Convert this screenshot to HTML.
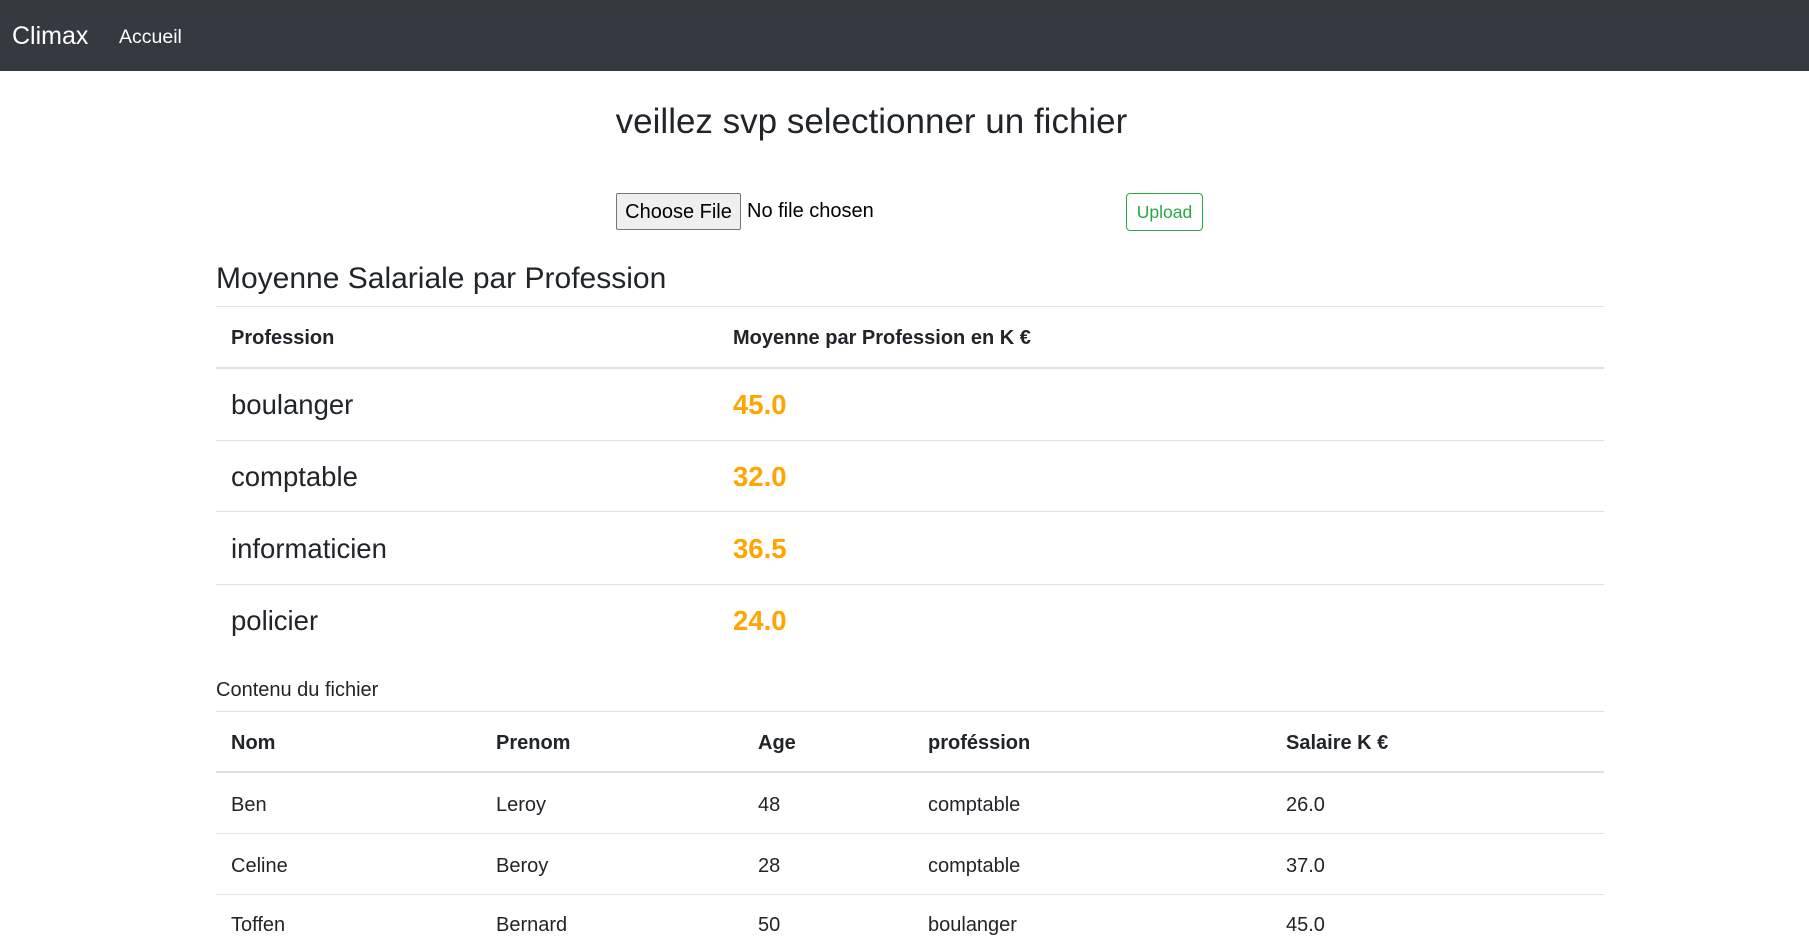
<!DOCTYPE html>
<html><head><meta charset="utf-8"><style>
*{box-sizing:border-box;margin:0;padding:0}
body{width:1809px;height:921px;overflow:hidden;background:#fff;font-family:"Liberation Sans",sans-serif;color:#212529}
.nav{position:absolute;left:0;top:0;width:1809px;height:71px;background:#343a40;border-top:1px solid #3d3a35}
.brand{position:absolute;left:12px;top:21px;font-size:25px;color:#fff}
.acc{position:absolute;left:119px;top:25px;font-size:19.5px;color:#fff}
.title{position:absolute;left:0;width:1743px;text-align:center;top:102px;font-size:35px}
.fbtn{position:absolute;left:616px;top:193px;width:125px;height:37px;background:#efefef;border:1px solid #767676;border-radius:2px;font-size:20px;text-align:center;line-height:37px;color:#000}
.nofile{position:absolute;left:747px;top:200px;font-size:20px;color:#000}
.up{position:absolute;left:1126px;top:193px;width:77px;height:38px;border:1px solid #28a745;border-radius:4px;color:#28a745;font-size:17.5px;text-align:center;line-height:36px}
.h{position:absolute;left:216px;top:262px;font-size:30px}
.line{position:absolute;left:216px;width:1388px;height:1px;background:#dee2e6}
.t{position:absolute;white-space:nowrap}
.b{font-weight:bold;font-size:20px}
.big{font-size:27.5px}
.or{color:#ffa500;font-weight:bold;font-size:27.5px}
.n{font-size:20px}
</style></head><body>
<div class="nav"><span class="brand">Climax</span><span class="acc">Accueil</span></div>
<div class="title">veillez svp selectionner un fichier</div>
<div class="fbtn">Choose File</div><div class="nofile">No file chosen</div>
<div class="up">Upload</div>
<div class="h">Moyenne Salariale par Profession</div>
<div class="line" style="top:306px"></div>
<div class="t b" style="left:231px;top:327px">Profession</div>
<div class="t b" style="left:733px;top:327px">Moyenne par Profession en K €</div>
<div class="line" style="top:367px;height:2px"></div>
<div class="t big" style="left:231px;top:389px">boulanger</div><div class="t or" style="left:733px;top:389px">45.0</div>
<div class="line" style="top:440px"></div>
<div class="t big" style="left:231px;top:461px">comptable</div><div class="t or" style="left:733px;top:461px">32.0</div>
<div class="line" style="top:511px"></div>
<div class="t big" style="left:231px;top:533px">informaticien</div><div class="t or" style="left:733px;top:533px">36.5</div>
<div class="line" style="top:584px"></div>
<div class="t big" style="left:231px;top:605px">policier</div><div class="t or" style="left:733px;top:605px">24.0</div>
<div class="t" style="left:216px;top:679px;font-size:20px">Contenu du fichier</div>
<div class="line" style="top:711px"></div>
<div class="t b" style="left:231px;top:732px">Nom</div>
<div class="t b" style="left:496px;top:732px">Prenom</div>
<div class="t b" style="left:758px;top:732px">Age</div>
<div class="t b" style="left:928px;top:732px">proféssion</div>
<div class="t b" style="left:1286px;top:732px">Salaire K €</div>
<div class="line" style="top:771px;height:2px"></div>
<div class="t n" style="left:231px;top:794px">Ben</div><div class="t n" style="left:496px;top:794px">Leroy</div><div class="t n" style="left:758px;top:794px">48</div><div class="t n" style="left:928px;top:794px">comptable</div><div class="t n" style="left:1286px;top:794px">26.0</div>
<div class="line" style="top:833px"></div>
<div class="t n" style="left:231px;top:855px">Celine</div><div class="t n" style="left:496px;top:855px">Beroy</div><div class="t n" style="left:758px;top:855px">28</div><div class="t n" style="left:928px;top:855px">comptable</div><div class="t n" style="left:1286px;top:855px">37.0</div>
<div class="line" style="top:894px"></div>
<div class="t n" style="left:231px;top:914px">Toffen</div><div class="t n" style="left:496px;top:914px">Bernard</div><div class="t n" style="left:758px;top:914px">50</div><div class="t n" style="left:928px;top:914px">boulanger</div><div class="t n" style="left:1286px;top:914px">45.0</div>
</body></html>
